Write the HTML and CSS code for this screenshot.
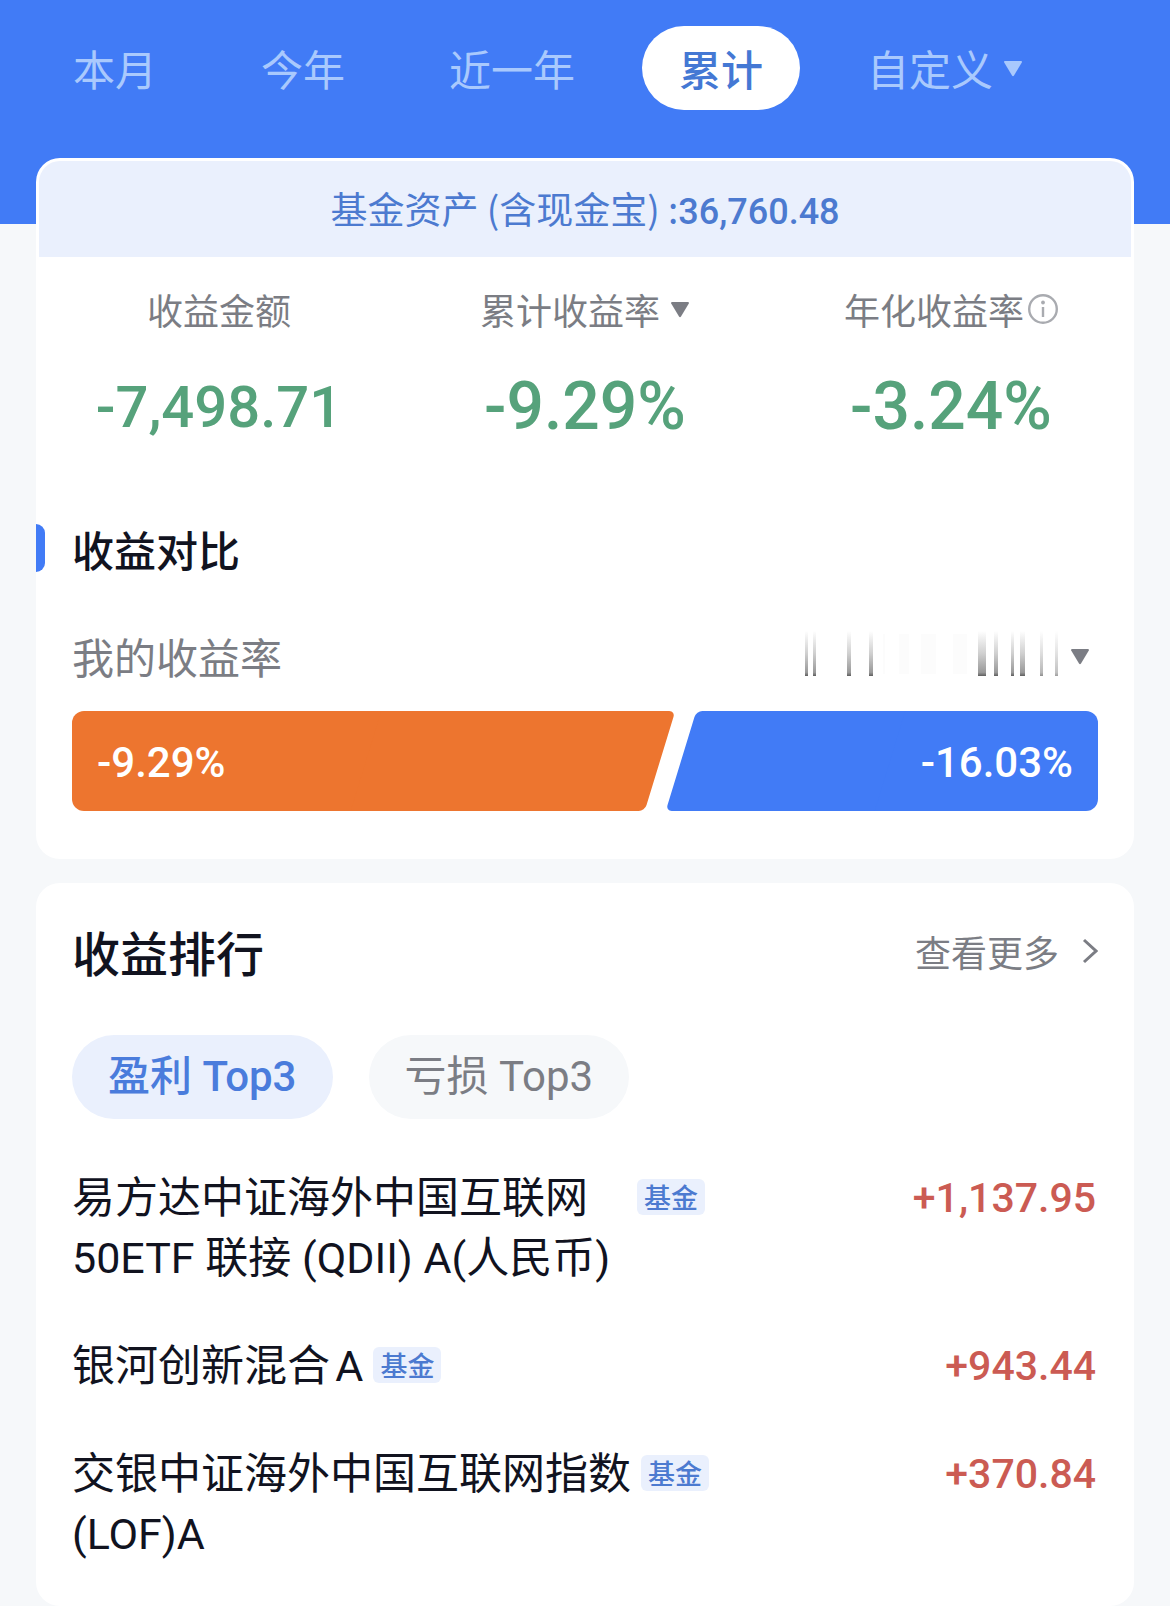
FILE: index.html
```html
<!DOCTYPE html>
<html lang="zh-CN">
<head>
<meta charset="utf-8">
<meta name="viewport" content="width=device-width, initial-scale=1">
<title>收益分析</title>
<link rel="stylesheet" href="styles.css">
</head>
<body>
<header class="top">
  <nav class="periods" aria-label="时间范围">
    <button class="period" type="button">本月</button>
    <button class="period" type="button">今年</button>
    <button class="period" type="button">近一年</button>
    <button class="period period-active" type="button">累计</button>
    <button class="period" type="button">自定义<svg class="caret" viewBox="0 0 20 17" aria-hidden="true"><path d="M2 1h16q1.500 0 .8 1.500l-7.800 13q-1 1.400-2 0l-7.800-13q-.7-1.500.8-1.500z"/></svg></button>
  </nav>
</header>
<main>
  <section class="card summary">
    <p class="assets">基金资产 (含现金宝) :<strong class="num assets-value">36,760.48</strong></p>
    <div class="stats">
      <div class="stat">
        <span class="stat-label">收益金额</span>
        <span class="stat-value num stat-money">-7,498.71</span>
      </div>
      <div class="stat">
        <button class="stat-label" type="button">累计收益率<svg class="caret" viewBox="0 0 20 17" aria-hidden="true"><path d="M2 1h16q1.500 0 .8 1.500l-7.800 13q-1 1.400-2 0l-7.800-13q-.7-1.500.8-1.500z"/></svg></button>
        <span class="stat-value num">-9.29%</span>
      </div>
      <div class="stat">
        <button class="stat-label" type="button">年化收益率<svg class="info" viewBox="0 0 30 30" aria-hidden="true"><circle cx="15" cy="15" r="13.800"/><path d="M15 13v10"/><circle class="info-dot" cx="15" cy="8.500" r="1.900"/></svg></button>
        <span class="stat-value num">-3.24%</span>
      </div>
    </div>
    <h2 class="compare-title">收益对比</h2>
    <div class="compare">
      <div class="compare-head">
        <span>我的收益率</span>
        <button class="benchmark" type="button" aria-label="选择对比基准">
          <svg class="masked" viewBox="0 0 260 46" aria-hidden="true">
            <defs>
              <linearGradient id="fade" x1="0" y1="0" x2="0" y2="1">
                <stop offset="0" stop-color="#777" stop-opacity="0"/>
                <stop offset=".5" stop-color="#777" stop-opacity=".35"/>
                <stop offset=".92" stop-color="#777" stop-opacity=".75"/>
                <stop offset="1" stop-color="#555" stop-opacity=".95"/>
              </linearGradient>
            </defs>
            <g fill="#fcfcfc"><rect x="80" y="4" width="2" height="40"/><rect x="96" y="4" width="10" height="40"/><rect x="118" y="4" width="12" height="40"/><rect x="128" y="4" width="5" height="40"/><rect x="150" y="4" width="14" height="40"/></g>
            <g fill="url(#fade)"><rect x="2" y="1" width="3" height="45"/><rect x="10" y="1" width="3" height="45"/><rect x="44" y="1" width="4" height="45"/><rect x="66" y="1" width="4" height="45"/><rect x="175" y="1" width="8" height="45"/><rect x="191" y="1" width="4" height="45"/><rect x="208" y="1" width="3" height="45"/><rect x="217" y="1" width="5" height="45"/><rect x="237" y="1" width="3" height="45" opacity=".7"/><rect x="252" y="1" width="3" height="45" opacity=".6"/></g>
          </svg>
          <svg class="caret" viewBox="0 0 20 17" aria-hidden="true"><path d="M2 1h16q1.500 0 .8 1.500l-7.800 13q-1 1.400-2 0l-7.800-13q-.7-1.500.8-1.500z"/></svg>
        </button>
      </div>
      <div class="duel">
        <div class="side side-mine num">-9.29%</div>
        <div class="side side-other num">-16.03%</div>
      </div>
    </div>
  </section>

  <section class="card ranking">
    <div class="ranking-head">
      <h2 class="ranking-title">收益排行</h2>
      <a class="more" href="#">查看更多<svg class="chevron" viewBox="0 0 16 26" aria-hidden="true"><path d="M2 2l12 11L2 24"/></svg></a>
    </div>
    <div class="chips">
      <button class="chip chip-active" type="button">盈利 Top3</button>
      <button class="chip" type="button">亏损 Top3</button>
    </div>
    <ul class="funds">
      <li class="fund">
        <span class="fund-name fund-name-long">易方达中证海外中国互联网<br>50ETF 联接 (QDII) A(人民币)</span>
        <span class="tag">基金</span>
        <span class="gain num">+1,137.95</span>
      </li>
      <li class="fund">
        <span class="fund-name">银河创新混合A</span>
        <span class="tag">基金</span>
        <span class="gain num">+943.44</span>
      </li>
      <li class="fund">
        <span class="fund-name fund-name-long">交银中证海外中国互联网指数<br>(LOF)A</span>
        <span class="tag">基金</span>
        <span class="gain num">+370.84</span>
      </li>
    </ul>
  </section>
</main>
</body>
</html>
```
FILE: styles.css
```css
* {
  box-sizing: border-box;
}

body {
  margin: 0;
  background: #f6f8fa;
  color: #11131f;
  font-family: "Noto Sans CJK SC", sans-serif;
  font-size: 42px;
  line-height: 60px;
}

h2, p, ul {
  margin: 0;
  padding: 0;
}

button {
  margin: 0;
  padding: 0;
  border: 0;
  background: none;
  color: inherit;
  font: inherit;
  white-space: nowrap;
}

.num {
  font-family: Roboto, sans-serif;
  font-weight: 500;
}

.caret {
  width: 20px;
  height: 17px;
  fill: currentColor;
}

/* Period tabs */
.top {
  padding: 26px 36px 114px;
  background: #417bf6;
}

.periods {
  display: flex;
  gap: 30px;
}

.period {
  display: flex;
  align-items: center;
  gap: 10px;
  height: 84px;
  padding: 0 37px;
  border-radius: 42px;
  color: #a9c9fd;
}

.period-active {
  background: #fff;
  color: #4478d4;
  font-weight: 500;
}

.card {
  margin: 0 36px;
  border-radius: 24px;
  background: #fff;
}

/* Summary */
.summary {
  margin-top: -66px;
  padding: 3px 0 48px;
}

.assets {
  margin: 0 3px;
  padding-bottom: 2px;
  border-radius: 21px 21px 0 0;
  background: #eaf0fd;
  color: #4c7ad0;
  font-size: 37px;
  line-height: 94px;
  text-align: center;
}

.assets-value {
  font-size: 36px;
  line-height: 36px;
}

.stats {
  display: grid;
  grid-template-columns: repeat(3, 1fr);
  padding-top: 28px;
}

.stat {
  display: flex;
  flex-direction: column;
  align-items: center;
  gap: 38px;
}

.stat-label {
  display: flex;
  align-items: center;
  gap: 10px;
  color: #7b7d84;
  font-size: 36px;
  line-height: 48px;
}

.stat-value {
  color: #56a27b;
  font-size: 66px;
  line-height: 72px;
}

.stat-money {
  font-size: 58px;
}

.info {
  width: 30px;
  height: 30px;
  margin-left: -6px;
  fill: none;
  stroke: #a9abb0;
  stroke-width: 2.4;
}

.info-dot {
  fill: #a9abb0;
  stroke: none;
}

.compare-title {
  display: flex;
  gap: 27px;
  margin-top: 81px;
  font-size: 42px;
  font-weight: 500;
  line-height: 50px;
}

.compare-title::before {
  content: "";
  width: 9px;
  height: 48px;
  border-radius: 0 9px 9px 0;
  background: #417bf6;
}

.compare {
  padding: 52px 36px 0;
}

.compare-head {
  display: flex;
  justify-content: space-between;
  color: #7b7d84;
}

.benchmark {
  display: flex;
  align-items: center;
  gap: 7px;
  padding-right: 8px;
}

.masked {
  width: 260px;
  height: 46px;
  margin-bottom: 6px;
}

.duel {
  display: grid;
  grid-template-columns: 587fr 417fr;
  gap: 22px;
  margin-top: 25px;
}

.side {
  position: relative;
  isolation: isolate;
  height: 100px;
  padding: 0 25px;
  color: #fff;
  line-height: 104px;
}

.side::before,
.side::after {
  content: "";
  position: absolute;
  z-index: -1;
  top: 0;
  bottom: 0;
}

/* straight outer part */
.side::before {
  left: 0;
  right: 30px;
  border-radius: 12px 0 0 12px;
}

/* slanted inner edge */
.side::after {
  left: 50%;
  right: 0;
  border-radius: 0 6px 6px 0;
  transform: skewX(-17deg);
}

.side-mine::before,
.side-mine::after {
  background: #ed752f;
}

.side-other {
  text-align: right;
}

.side-other::before,
.side-other::after {
  background: #417bf6;
}

.side-other::before {
  left: 30px;
  right: 0;
  border-radius: 0 12px 12px 0;
}

.side-other::after {
  left: 0;
  right: 50%;
  border-radius: 6px 0 0 6px;
}

/* Ranking */
.ranking {
  margin-top: 24px;
  padding: 38px 36px 42px;
}

.ranking-head {
  display: flex;
  justify-content: space-between;
}

.ranking-title {
  font-size: 48px;
  font-weight: 500;
}

.more {
  display: flex;
  align-items: center;
  gap: 23px;
  color: #7b7d84;
  font-size: 36px;
  text-decoration: none;
}

.chevron {
  width: 16px;
  height: 26px;
  fill: none;
  stroke: currentColor;
  stroke-width: 3;
}

.chips {
  display: flex;
  gap: 36px;
  margin-top: 54px;
}

.chip {
  height: 84px;
  padding: 0 36px;
  border-radius: 42px;
  background: #f6f8fa;
  color: #7b7d84;
  font-family: Roboto, "Noto Sans CJK SC", sans-serif;
}

.chip-active {
  background: #eaf0fd;
  color: #4a7cdc;
  font-weight: 500;
}

.funds {
  display: flex;
  flex-direction: column;
  gap: 48px;
  margin-top: 49px;
  list-style: none;
}

.fund {
  display: flex;
  align-items: flex-start;
  gap: 10px;
}

.fund-name {
  font-family: Roboto, "Noto Sans CJK SC", sans-serif;
  font-size: 43px;
  text-autospace: normal;
}

.fund-name-long {
  min-width: 555px;
}

.tag {
  flex: none;
  margin-top: 11px;
  padding: 0 7px;
  border-radius: 6px;
  background: #eaf0fd;
  color: #4c7ad0;
  font-size: 27px;
  font-weight: 500;
  line-height: 36px;
}

.gain {
  margin-left: auto;
  padding-right: 2px;
  color: #cb5b53;
  font-size: 41px;
}
```
